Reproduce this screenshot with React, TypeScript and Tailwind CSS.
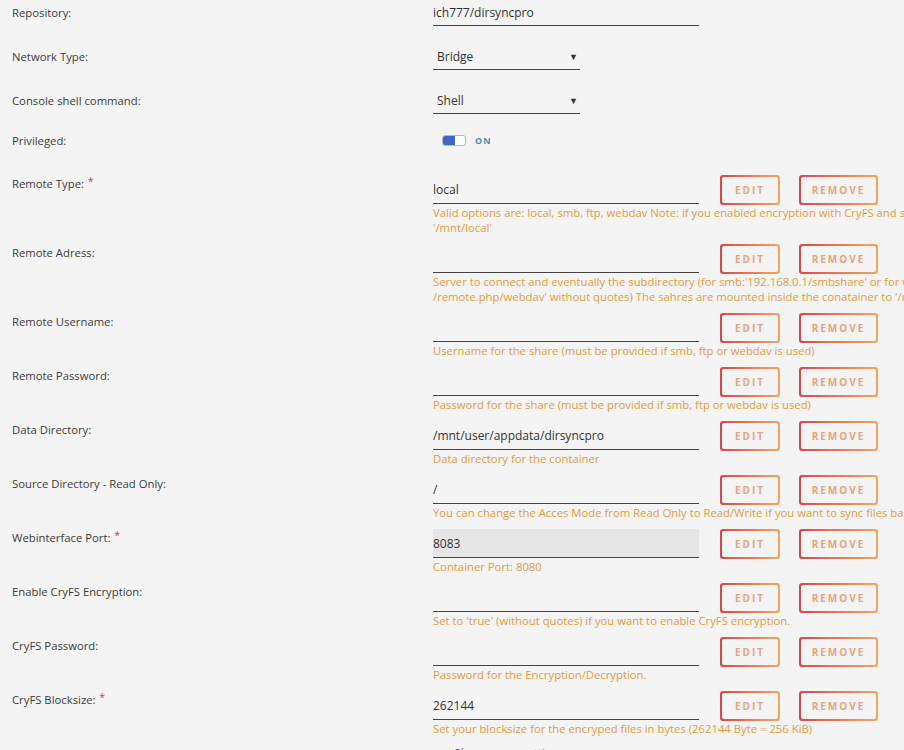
import React from "react";

const FONT = { fontFamily: '"Open Sans", "Noto Sans", sans-serif' };

function Btn({ label, w }: { label: string; w: string }) {
  return (
    <div className={`rounded-[3px] bg-gradient-to-r from-[#d9454a] to-[#f3a65f] p-[2px] ${w} h-[30px]`}>
      <div className="flex h-full w-full items-center justify-center rounded-[2px] bg-[#f4f4f4] text-[10px] font-bold tracking-[2px] text-[#e8a27e]">
        {label}
      </div>
    </div>
  );
}

type Row = {
  label: string;
  req?: boolean;
  value?: string;
  gray?: boolean;
  help: string[];
};

const rows: Row[] = [
  {
    label: "Remote Type:",
    req: true,
    value: "local",
    help: [
      "Valid options are: local, smb, ftp, webdav Note: if you enabled encryption with CryFS and set it to 'true' the remote must be mounted to",
      "'/mnt/local'",
    ],
  },
  {
    label: "Remote Adress:",
    value: "",
    help: [
      "Server to connect and eventually the subdirectory (for smb:'192.168.0.1/smbshare' or for webdav:'https://yourdomain.com",
      "/remote.php/webdav' without quotes) The sahres are mounted inside the conatainer to '/mnt/remote'",
    ],
  },
  {
    label: "Remote Username:",
    value: "",
    help: ["Username for the share (must be provided if smb, ftp or webdav is used)"],
  },
  {
    label: "Remote Password:",
    value: "",
    help: ["Password for the share (must be provided if smb, ftp or webdav is used)"],
  },
  {
    label: "Data Directory:",
    value: "/mnt/user/appdata/dirsyncpro",
    help: ["Data directory for the container"],
  },
  {
    label: "Source Directory - Read Only:",
    value: "/",
    help: ["You can change the Acces Mode from Read Only to Read/Write if you want to sync files back to the source directory"],
  },
  {
    label: "Webinterface Port:",
    req: true,
    value: "8083",
    gray: true,
    help: ["Container Port: 8080"],
  },
  {
    label: "Enable CryFS Encryption:",
    value: "",
    help: ["Set to 'true' (without quotes) if you want to enable CryFS encryption."],
  },
  {
    label: "CryFS Password:",
    value: "",
    help: ["Password for the Encryption/Decryption."],
  },
  {
    label: "CryFS Blocksize:",
    req: true,
    value: "262144",
    help: ["Set your blocksize for the encryped files in bytes (262144 Byte = 256 KiB)"],
  },
];

export default function App() {
  return (
    <div className="h-[750px] w-[904px] overflow-hidden bg-[#f4f4f4]" style={FONT}>
      {/* Repository */}
      <div className="flex h-[44px] items-start">
        <div className="w-[433px] shrink-0 pl-3 text-[11.3px] leading-[26px] text-[#3c3c3c]">Repository:</div>
        <div className="h-[26px] w-[266px] border-b border-[#444] text-[12px] leading-[25px] text-[#333]">
          ich777/dirsyncpro
        </div>
      </div>
      {/* Network Type */}
      <div className="flex h-[44px] items-start">
        <div className="w-[433px] shrink-0 pl-3 text-[11.3px] leading-[26px] text-[#3c3c3c]">Network Type:</div>
        <div className="flex h-[26px] w-[147px] items-center justify-between border-b border-[#444] pl-1 pr-[2px] text-[12px] text-[#333]">
          <span>Bridge</span>
          <span className="text-[9px]">▼</span>
        </div>
      </div>
      {/* Console shell */}
      <div className="flex h-[44px] items-start">
        <div className="w-[433px] shrink-0 pl-3 text-[11.3px] leading-[26px] text-[#3c3c3c]">Console shell command:</div>
        <div className="flex h-[26px] w-[147px] items-center justify-between border-b border-[#444] pl-1 pr-[2px] text-[12px] text-[#333]">
          <span>Shell</span>
          <span className="text-[9px]">▼</span>
        </div>
      </div>
      {/* Privileged */}
      <div className="flex h-[43px] items-start">
        <div className="w-[433px] shrink-0 pl-3 text-[11.3px] leading-[17px] text-[#3c3c3c]">Privileged:</div>
        <div className="flex h-[17px] items-center pl-[9px]">
          <div className="relative h-[11px] w-[24px] overflow-hidden rounded-[3px] border border-[#b8b8c8] bg-white">
            <div className="h-full w-[12px] bg-[#3f68c0]" />
          </div>
          <span className="ml-[9px] text-[9px] font-bold tracking-[1px] text-[#4c8fb5]">ON</span>
        </div>
      </div>

      {rows.map((r) => (
        <div key={r.label} className="flex items-start pb-[9px]">
          <div className="w-[433px] shrink-0 pl-3 pt-[1px] text-[11.3px] leading-[16px] text-[#3c3c3c]">
            {r.label}
            {r.req && <span className="relative top-[-3px] ml-[4px] text-[10px] text-[#cc3344]">*</span>}
          </div>
          <div className="flex flex-col">
            <div className="flex h-[30px] items-start">
              <div
                className={`h-[29px] w-[266px] border-b border-[#444] text-[12px] leading-[29px] text-[#333] ${
                  r.gray ? "bg-[#e6e6e6]" : ""
                }`}
              >
                {r.value}
              </div>
              <div className="ml-[21px] flex gap-[19px]">
                <Btn label="EDIT" w="w-[60px]" />
                <Btn label="REMOVE" w="w-[79px]" />
              </div>
            </div>
            <div className="text-[11.3px] leading-[15px] text-[#e69a3c]">
              {r.help.map((h, i) => (
                <div key={i} className="whitespace-nowrap">
                  {h}
                </div>
              ))}
            </div>
          </div>
        </div>
      ))}
      <div className="mt-[1px] flex">
        <div className="w-[445px] shrink-0" />
        <div className="text-[12px] leading-[15px] text-[#486dba]">▸ Show more settings ...</div>
      </div>
    </div>
  );
}
